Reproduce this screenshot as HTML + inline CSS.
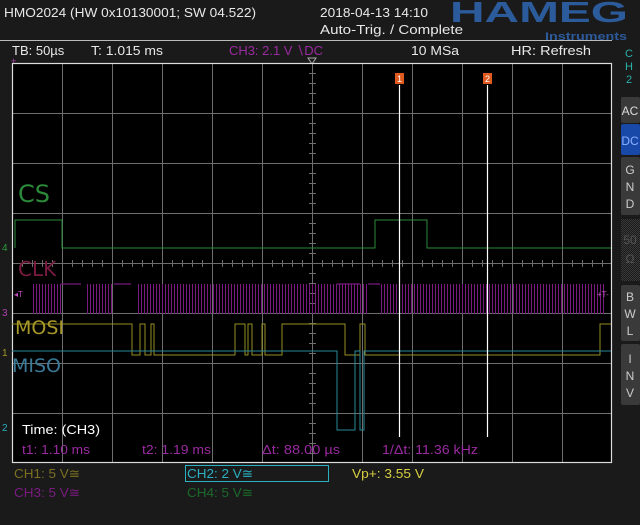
<!DOCTYPE html>
<html><head><meta charset="utf-8"><style>
body{margin:0;width:640px;height:520px;background:#1b1a1b;overflow:hidden;font-family:"Liberation Sans",sans-serif;}
</style></head><body>
<svg width="640" height="520" xmlns="http://www.w3.org/2000/svg" font-family="Liberation Sans, sans-serif">
<defs>
<pattern id="clk" width="3" height="40" patternUnits="userSpaceOnUse"><rect x="0" y="0" width="1" height="40" fill="#7a1a80"/></pattern>
<pattern id="dith" width="2" height="2" patternUnits="userSpaceOnUse"><rect width="1" height="1" fill="#3a3a3a"/><rect x="1" y="1" width="1" height="1" fill="#3a3a3a"/></pattern>
</defs>
<rect width="640" height="520" fill="#1b1a1b"/>
<line x1="0" y1="40.5" x2="612" y2="40.5" stroke="#bbb" stroke-width="1"/>
<text x="4" y="17" fill="#e8e8e8" font-size="13" textLength="252" lengthAdjust="spacingAndGlyphs">HMO2024 (HW 0x10130001; SW 04.522)</text>
<text x="320" y="17" fill="#e8e8e8" font-size="13" textLength="108" lengthAdjust="spacingAndGlyphs">2018-04-13 14:10</text>
<text x="320" y="34" fill="#e8e8e8" font-size="13" textLength="143" lengthAdjust="spacingAndGlyphs">Auto-Trig. / Complete</text>
<text x="450" y="22" fill="#2c5b9b" font-size="29" font-weight="bold" textLength="178" lengthAdjust="spacingAndGlyphs">HAMEG</text>
<text x="545" y="40" fill="#2c5b9b" font-size="11" font-weight="bold" textLength="82" lengthAdjust="spacingAndGlyphs">Instruments</text>
<text x="12" y="55" fill="#e8e8e8" font-size="13">TB: 50µs</text>
<text x="91" y="55" fill="#e8e8e8" font-size="13" textLength="72" lengthAdjust="spacingAndGlyphs">T: 1.015 ms</text>
<text x="229" y="55" fill="#9a2aa0" font-size="13" textLength="94" lengthAdjust="spacingAndGlyphs">CH3: 2.1 V ∖DC</text>
<text x="411" y="55" fill="#e8e8e8" font-size="13" textLength="48" lengthAdjust="spacingAndGlyphs">10 MSa</text>
<text x="511" y="55" fill="#e8e8e8" font-size="13" textLength="80" lengthAdjust="spacingAndGlyphs">HR: Refresh</text>
<path d="M308 58 L316 58 L312 64 Z" fill="none" stroke="#aaa" stroke-width="1"/>
<text x="11" y="64" fill="#b040b0" font-size="9">+</text>
<rect x="12" y="63" width="600" height="400" fill="#000"/>
<g stroke="#6e6e6e" stroke-width="1">
<path d="M62.5 63V463M112.5 63V463M162.5 63V463M212.5 63V463M262.5 63V463M312.5 63V463M362.5 63V463M412.5 63V463M462.5 63V463M512.5 63V463M562.5 63V463"/>
<path d="M12 113.5H612M12 163.5H612M12 213.5H612M12 263.5H612M12 313.5H612M12 363.5H612M12 413.5H612"/>
</g>
<g stroke="#6e6e6e" stroke-width="1">
<path d="M22.5 260V267M32.5 260V267M42.5 260V267M52.5 260V267M72.5 260V267M82.5 260V267M92.5 260V267M102.5 260V267M122.5 260V267M132.5 260V267M142.5 260V267M152.5 260V267M172.5 260V267M182.5 260V267M192.5 260V267M202.5 260V267M222.5 260V267M232.5 260V267M242.5 260V267M252.5 260V267M272.5 260V267M282.5 260V267M292.5 260V267M302.5 260V267M322.5 260V267M332.5 260V267M342.5 260V267M352.5 260V267M372.5 260V267M382.5 260V267M392.5 260V267M402.5 260V267M422.5 260V267M432.5 260V267M442.5 260V267M452.5 260V267M472.5 260V267M482.5 260V267M492.5 260V267M502.5 260V267M522.5 260V267M532.5 260V267M542.5 260V267M552.5 260V267M572.5 260V267M582.5 260V267M592.5 260V267M602.5 260V267"/>
<path d="M309 73.5H316M309 83.5H316M309 93.5H316M309 103.5H316M309 123.5H316M309 133.5H316M309 143.5H316M309 153.5H316M309 173.5H316M309 183.5H316M309 193.5H316M309 203.5H316M309 223.5H316M309 233.5H316M309 243.5H316M309 253.5H316M309 273.5H316M309 283.5H316M309 293.5H316M309 303.5H316M309 323.5H316M309 333.5H316M309 343.5H316M309 353.5H316M309 373.5H316M309 383.5H316M309 393.5H316M309 403.5H316M309 423.5H316M309 433.5H316M309 443.5H316M309 453.5H316"/>
</g>
<rect x="12.5" y="63.5" width="599" height="399" fill="none" stroke="#ddd" stroke-width="1.2"/>
<path d="M15 248V220H62V248H375V220H427V248H611" fill="none" stroke="#2a8a3a" stroke-width="1"/>
<rect x="33" y="284" width="28" height="30" fill="url(#clk)"/>
<rect x="86" y="284" width="28" height="30" fill="url(#clk)"/>
<rect x="136" y="284" width="233" height="30" fill="url(#clk)"/>
<rect x="380" y="284" width="225" height="30" fill="url(#clk)"/>
<path d="M61 284H81M114 284H131M337 284H360M368 284H380" stroke="#7a1a80" stroke-width="1.2"/>
<path d="M12 324H132V355H140V324H145V355H151V324H154V355H235V324H245V355H248V324H252V355H262V324H265V355H282V324H345V355H360V324H365V355H600V324H611" fill="none" stroke="#948e26" stroke-width="1"/>
<path d="M12 351H337V430H355V351H360V430H364V351H611" fill="none" stroke="#2a8a98" stroke-width="1"/>
<text x="18" y="202" fill="#2a8a3a" font-size="24" font-family="DejaVu Sans">CS</text>
<text x="18" y="276" fill="#7a1a40" font-size="20" font-family="DejaVu Sans">CLK</text>
<text x="15" y="334" fill="#a8982a" font-size="19" font-family="DejaVu Sans">MOSI</text>
<text x="12" y="372" fill="#3a7a98" font-size="19" font-family="DejaVu Sans">MISO</text>
<text x="2" y="251" fill="#2a9a3a" font-size="10">4</text>
<text x="2" y="316" fill="#b040b0" font-size="10">3</text>
<text x="2" y="356" fill="#a09a28" font-size="10">1</text>
<text x="2" y="431" fill="#2ab0c0" font-size="10">2</text>
<text x="14" y="297" fill="#c050c0" font-size="8">◂T</text>
<text x="597" y="297" fill="#c050c0" font-size="8">+T-</text>
<line x1="399.5" y1="85" x2="399.5" y2="437" stroke="#fff" stroke-width="1.2"/>
<line x1="487.5" y1="85" x2="487.5" y2="437" stroke="#fff" stroke-width="1.2"/>
<rect x="395" y="73" width="9" height="11" fill="#e05a20"/>
<text x="397" y="82" fill="#fff" font-size="9">1</text>
<rect x="483" y="73" width="9" height="11" fill="#e05a20"/>
<text x="485" y="82" fill="#fff" font-size="9">2</text>
<text x="22" y="434" fill="#fff" font-size="13" textLength="78" lengthAdjust="spacingAndGlyphs">Time: (CH3)</text>
<text x="22" y="454" fill="#9a2aa0" font-size="13" textLength="68" lengthAdjust="spacingAndGlyphs">t1: 1.10 ms</text>
<text x="142" y="454" fill="#9a2aa0" font-size="13" textLength="69" lengthAdjust="spacingAndGlyphs">t2: 1.19 ms</text>
<text x="262" y="454" fill="#9a2aa0" font-size="13" textLength="78" lengthAdjust="spacingAndGlyphs">Δt: 88.00 µs</text>
<text x="382" y="454" fill="#9a2aa0" font-size="13" textLength="96" lengthAdjust="spacingAndGlyphs">1/Δt: 11.36 kHz</text>
<text x="14" y="478" fill="#7a7020" font-size="13" textLength="66" lengthAdjust="spacingAndGlyphs">CH1: 5 V≅</text>
<text x="14" y="497" fill="#7a1a80" font-size="13" textLength="66" lengthAdjust="spacingAndGlyphs">CH3: 5 V≅</text>
<rect x="185.5" y="465.5" width="143" height="16" fill="none" stroke="#2ab0c0" stroke-width="1"/>
<text x="187" y="478" fill="#2ab0c0" font-size="13" textLength="66" lengthAdjust="spacingAndGlyphs">CH2: 2 V≅</text>
<text x="187" y="497" fill="#1a6a2a" font-size="13" textLength="66" lengthAdjust="spacingAndGlyphs">CH4: 5 V≅</text>
<text x="352" y="478" fill="#d8d040" font-size="13" textLength="72" lengthAdjust="spacingAndGlyphs">Vp+: 3.55 V</text>
<g fill="#2ab0a8" font-size="11" text-anchor="middle">
<text x="629" y="57">C</text><text x="629" y="70">H</text><text x="629" y="83">2</text>
</g>
<rect x="621" y="97" width="19" height="26" rx="2" fill="#3a3a3a"/>
<text x="630" y="115" fill="#ddd" font-size="12" text-anchor="middle">AC</text>
<rect x="621" y="124" width="19" height="31" rx="2" fill="#1848a8"/>
<text x="630" y="145" fill="#8ab0ff" font-size="12" text-anchor="middle">DC</text>
<rect x="621" y="157" width="19" height="58" rx="2" fill="#3a3a3a"/>
<g fill="#ccc" font-size="12" text-anchor="middle"><text x="630" y="174">G</text><text x="630" y="191">N</text><text x="630" y="208">D</text></g>
<rect x="621" y="219" width="19" height="62" fill="url(#dith)"/>
<text x="630" y="244" fill="#555" font-size="12" text-anchor="middle">50</text>
<text x="630" y="263" fill="#555" font-size="12" text-anchor="middle">Ω</text>
<rect x="621" y="285" width="19" height="56" rx="2" fill="#3a3a3a"/>
<g fill="#ccc" font-size="12" text-anchor="middle"><text x="630" y="301">B</text><text x="630" y="318">W</text><text x="630" y="335">L</text></g>
<rect x="621" y="344" width="19" height="61" rx="2" fill="#3a3a3a"/>
<g fill="#ccc" font-size="12" text-anchor="middle"><text x="630" y="363">I</text><text x="630" y="380">N</text><text x="630" y="397">V</text></g>
</svg>
</body></html>
